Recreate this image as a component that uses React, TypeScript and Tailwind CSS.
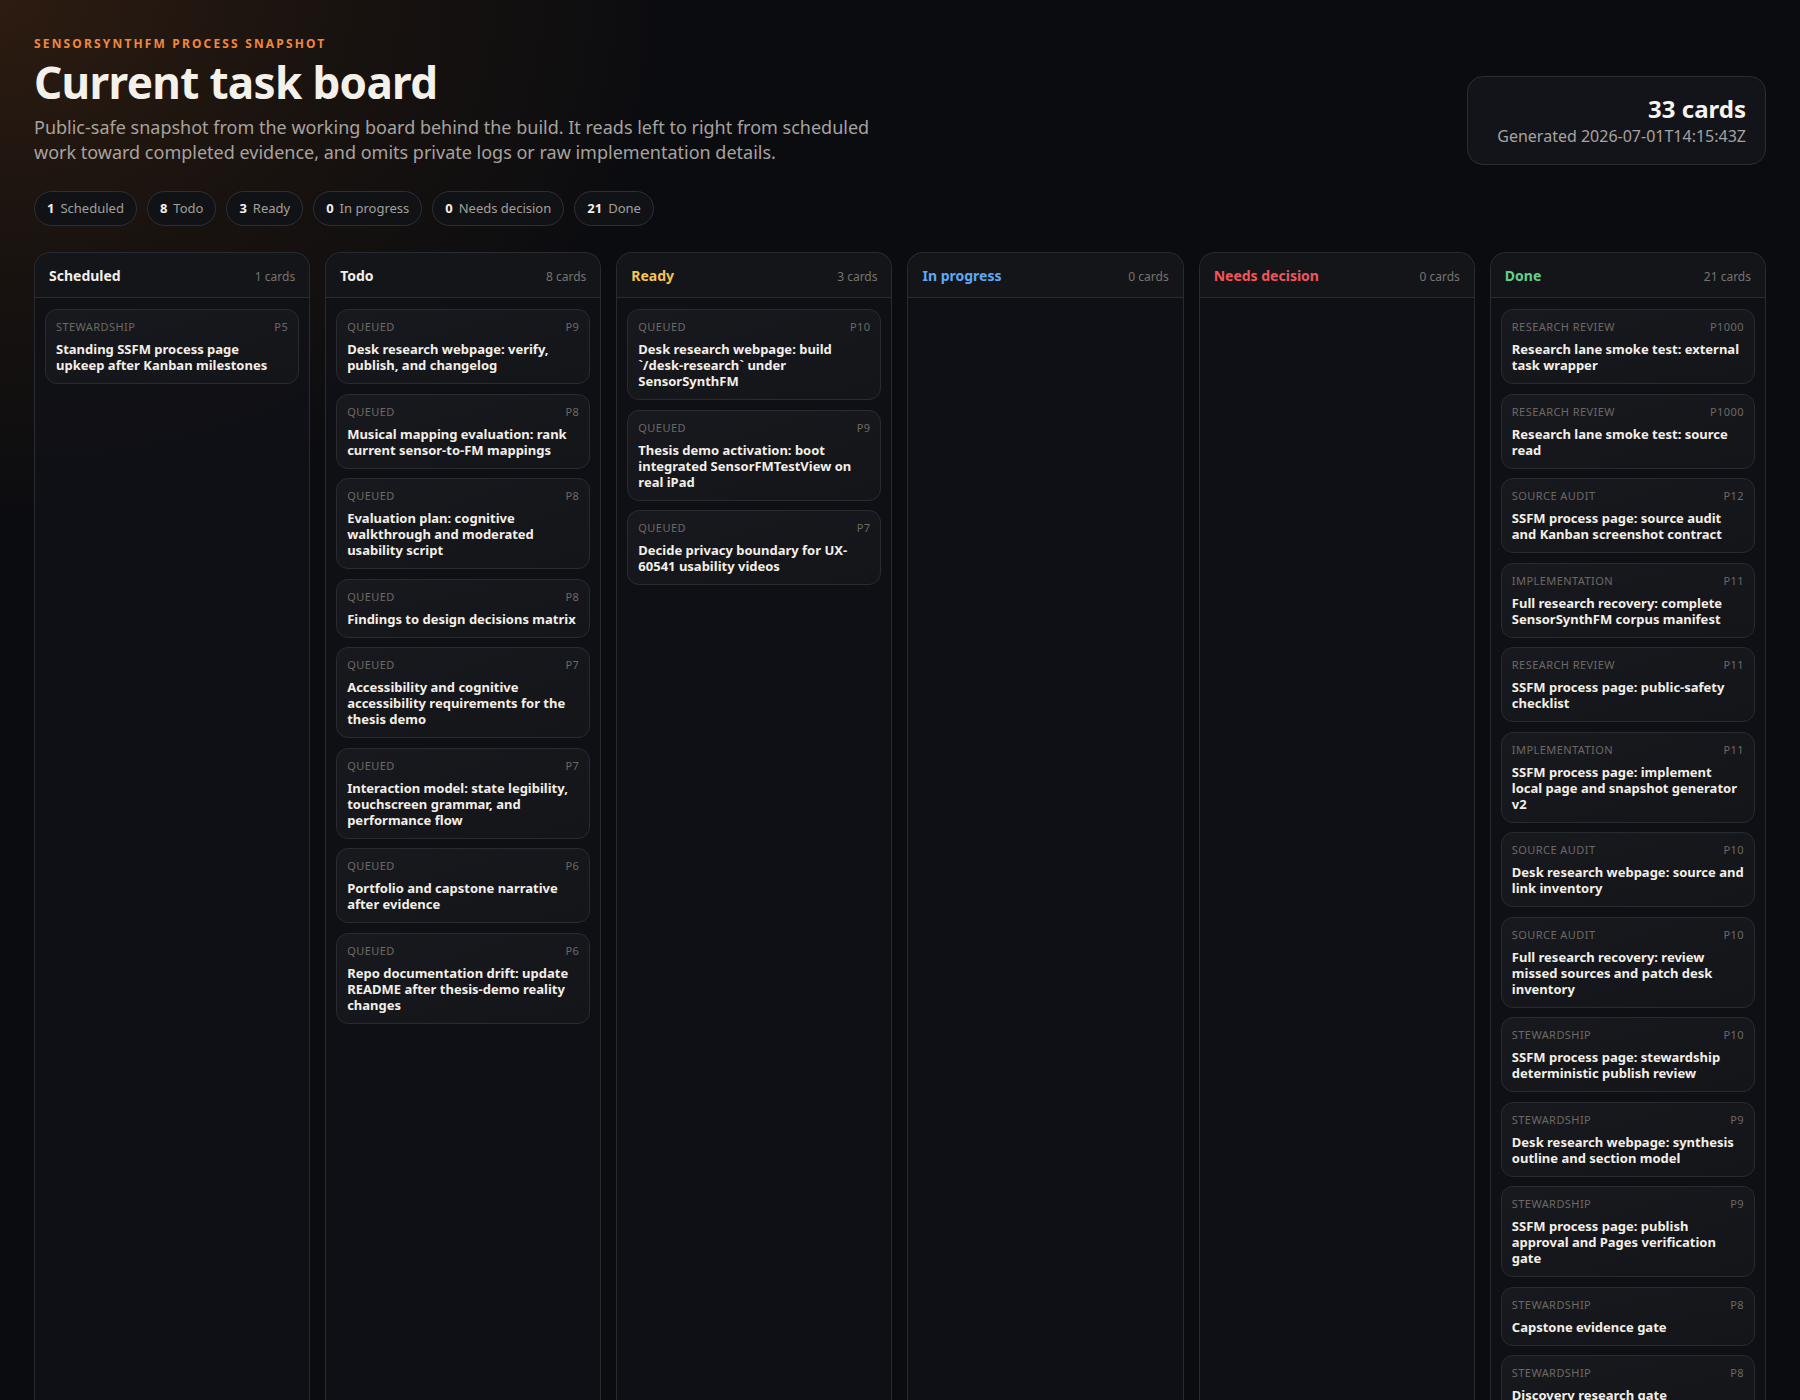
import React from 'react';

type Card = { tag: string; prio: string; title: string };
type Column = { name: string; color: string; cards: Card[] };

const q = (prio: string, title: string): Card => ({ tag: 'Queued', prio, title });

const COLUMNS: Column[] = [
  {
    name: 'Scheduled',
    color: 'text-[#f3efe8]',
    cards: [{ tag: 'Stewardship', prio: 'P5', title: 'Standing SSFM process page upkeep after Kanban milestones' }],
  },
  {
    name: 'Todo',
    color: 'text-[#f3efe8]',
    cards: [
      q('P9', 'Desk research webpage: verify, publish, and changelog'),
      q('P8', 'Musical mapping evaluation: rank current sensor-to-FM mappings'),
      q('P8', 'Evaluation plan: cognitive walkthrough and moderated usability script'),
      q('P8', 'Findings to design decisions matrix'),
      q('P7', 'Accessibility and cognitive accessibility requirements for the thesis demo'),
      q('P7', 'Interaction model: state legibility, touchscreen grammar, and performance flow'),
      q('P6', 'Portfolio and capstone narrative after evidence'),
      q('P6', 'Repo documentation drift: update README after thesis-demo reality changes'),
    ],
  },
  {
    name: 'Ready',
    color: 'text-[#f6c453]',
    cards: [
      q('P10', 'Desk research webpage: build `/desk-research` under SensorSynthFM'),
      q('P9', 'Thesis demo activation: boot integrated SensorFMTestView on real iPad'),
      q('P7', 'Decide privacy boundary for UX-60541 usability videos'),
    ],
  },
  { name: 'In progress', color: 'text-[#5ea8f5]', cards: [] },
  { name: 'Needs decision', color: 'text-[#f2555a]', cards: [] },
  {
    name: 'Done',
    color: 'text-[#62d08c]',
    cards: [
      { tag: 'Research review', prio: 'P1000', title: 'Research lane smoke test: external task wrapper' },
      { tag: 'Research review', prio: 'P1000', title: 'Research lane smoke test: source read' },
      { tag: 'Source audit', prio: 'P12', title: 'SSFM process page: source audit and Kanban screenshot contract' },
      { tag: 'Implementation', prio: 'P11', title: 'Full research recovery: complete SensorSynthFM corpus manifest' },
      { tag: 'Research review', prio: 'P11', title: 'SSFM process page: public-safety checklist' },
      { tag: 'Implementation', prio: 'P11', title: 'SSFM process page: implement local page and snapshot generator v2' },
      { tag: 'Source audit', prio: 'P10', title: 'Desk research webpage: source and link inventory' },
      { tag: 'Source audit', prio: 'P10', title: 'Full research recovery: review missed sources and patch desk inventory' },
      { tag: 'Stewardship', prio: 'P10', title: 'SSFM process page: stewardship deterministic publish review' },
      { tag: 'Stewardship', prio: 'P9', title: 'Desk research webpage: synthesis outline and section model' },
      { tag: 'Stewardship', prio: 'P9', title: 'SSFM process page: publish approval and Pages verification gate' },
      { tag: 'Stewardship', prio: 'P8', title: 'Capstone evidence gate' },
      { tag: 'Stewardship', prio: 'P8', title: 'Discovery research gate' },
    ],
  },
];

const COUNTS: [number, string][] = [
  [1, 'Scheduled'],
  [8, 'Todo'],
  [3, 'Ready'],
  [0, 'In progress'],
  [0, 'Needs decision'],
  [21, 'Done'],
];

const TOTALS: Record<string, number> = { Scheduled: 1, Todo: 8, Ready: 3, 'In progress': 0, 'Needs decision': 0, Done: 21 };

const TaskCard = ({ card }: { card: Card }) => (
  <div className="rounded-xl border border-[#2a2b31] bg-gradient-to-br from-[#18191e] to-[#141519] p-[10px]">
    <div className="flex items-center justify-between text-[11px] leading-[14px] uppercase tracking-[0.04em] text-[#6c6965]">
      <span>{card.tag}</span>
      <span>{card.prio}</span>
    </div>
    <div className="mt-[7px] text-[13px] leading-[16px] font-bold text-[#f3efe8]">{card.title}</div>
  </div>
);

export default function App() {
  return (
    <div
      className="min-h-screen bg-[#0b0c10] bg-[radial-gradient(ellipse_900px_700px_at_0%_0%,#2d1c11_0%,#1a130f_35%,#0b0c10_75%)] px-[34px] pt-[36px] text-[#f3efe8]"
      style={{ fontFamily: '"Noto Sans", "Open Sans", sans-serif' }}
    >
      <header className="flex items-end justify-between gap-8">
        <div className="max-w-[880px]">
          <div className="text-[12px] leading-[16px] font-bold uppercase tracking-[0.18em] text-[#f0883e]">
            SensorSynthFM process snapshot
          </div>
          <h1 className="mt-[7px] text-[44px] leading-[46px] font-bold tracking-[-0.015em] text-[#f4f1ea]">
            Current task board
          </h1>
          <p className="mt-[10px] text-[18px] leading-[25px] text-[#a8a29e]">
            Public-safe snapshot from the working board behind the build. It reads left to right from scheduled work
            toward completed evidence, and omits private logs or raw implementation details.
          </p>
        </div>
        <div className="w-[299px] rounded-2xl border border-[#2c2d33] bg-[#131419] px-[19px] pt-[17px] pb-[16px] text-right">
          <div className="text-[24px] leading-[29px] font-bold text-[#f7f4ee]">33 cards</div>
          <div className="mt-[1px] text-[16px] leading-[24px] text-[#a8a29e]">Generated 2026-07-01T14:15:43Z</div>
        </div>
      </header>

      <div className="mt-[26px] flex gap-[10px]">
        {COUNTS.map(([n, label]) => (
          <div
            key={label}
            className="flex h-[35px] items-center gap-[6px] rounded-full border border-[#2e2f36] bg-[#111216] px-[12px] text-[13px]"
          >
            <span className="font-bold text-[#f3efe8]">{n}</span>
            <span className="text-[#a3a09a]">{label}</span>
          </div>
        ))}
      </div>

      <div className="mt-[26px] grid grid-cols-6 gap-[15px]">
        {COLUMNS.map((col) => (
          <section
            key={col.name}
            className="min-h-[1160px] rounded-t-2xl border border-b-0 border-[#2a2b31] bg-[#101116]/80"
          >
            <div className="flex items-baseline justify-between rounded-t-2xl border-b border-[#2a2b31] bg-[#141519] px-[14px] pt-[13px] pb-[11px]">
              <span className={`text-[14px] leading-[20px] font-bold ${col.color}`}>{col.name}</span>
              <span className="text-[12px] text-[#77746f]">{TOTALS[col.name]} cards</span>
            </div>
            <div className="flex flex-col gap-[9.5px] px-[10px] pt-[11px] pb-[10px]">
              {col.cards.map((card, i) => (
                <TaskCard key={i} card={card} />
              ))}
            </div>
          </section>
        ))}
      </div>
    </div>
  );
}
